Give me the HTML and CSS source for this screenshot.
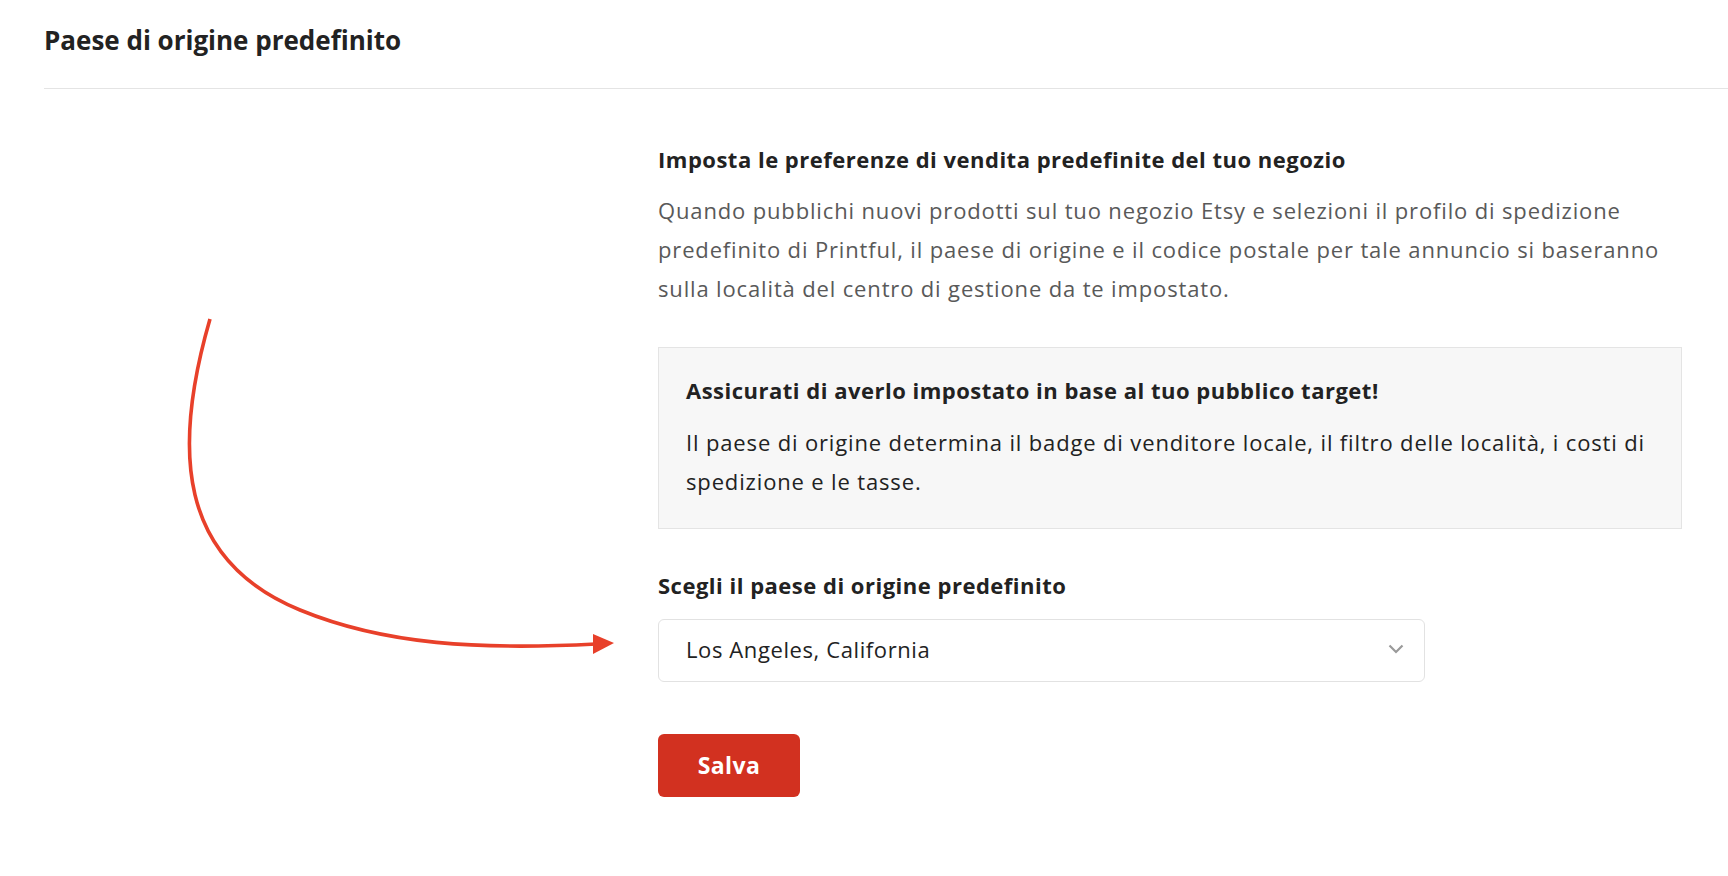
FILE: index.html
```html
<!DOCTYPE html>
<html lang="it">
<head>
  <meta charset="UTF-8" />
  <title>Paese di origine predefinito</title>
  <link rel="stylesheet" href="styles.css">
</head>
<body>
  <!-- intestazione sezione -->
  <header class="section-head">
    <h1 class="section-title">Paese di origine predefinito</h1>
  </header>

  <main class="section-body">
    <div class="aside"></div>

    <div class="settings">
      <h2 class="settings-title">Imposta le preferenze di vendita predefinite del tuo negozio</h2>
      <p class="settings-text">Quando pubblichi nuovi prodotti sul tuo negozio Etsy e selezioni il profilo di spedizione predefinito di Printful, il paese di origine e il codice postale per tale annuncio si baseranno sulla località del centro di gestione da te impostato.</p>

      <div class="notice">
        <h3 class="notice-title">Assicurati di averlo impostato in base al tuo pubblico target!</h3>
        <p class="notice-text">Il paese di origine determina il badge di venditore locale, il filtro delle località, i costi di spedizione e le tasse.</p>
      </div>

      <label class="field-label" for="origin">Scegli il paese di origine predefinito</label>
      <div class="select">
        <span id="origin" class="select-value">Los Angeles, California</span>
        <svg class="select-caret" width="16" height="10" viewBox="0 0 16 10">
          <path d="M1.5 1.5 L8 8 L14.5 1.5" fill="none" stroke="#9a9a9a" stroke-width="2.2" />
        </svg>
      </div>

      <button class="btn-save" type="button">Salva</button>
    </div>
  </main>

  <!-- freccia di richiamo -->
  <svg class="callout-arrow" width="700" height="700" viewBox="0 0 700 700">
    <path d="M210 319 C 172 450, 178 560, 300 610 C 385 645, 480 650, 596 644" fill="none" stroke="#e8402a" stroke-width="3.6" />
    <path d="M593 634 L614 643 L593 654 Z" fill="#e8402a" />
  </svg>
</body>
</html>
```

FILE: styles.css
```css
* {
  box-sizing: border-box;
  margin: 0;
  padding: 0;
}

body {
  font-family: "Open Sans", "Liberation Sans", sans-serif;
  color: #222;
  background: #fff;
  -webkit-font-smoothing: antialiased;
}

/* intestazione */
.section-head {
  margin-left: 44px;
  padding: 23px 0 30px;
  border-bottom: 1px solid #e4e4e4;
}

.section-title {
  font-size: 26px;
  line-height: 35px;
  font-weight: 700;
  color: #222;
}

/* corpo a due colonne */
.section-body {
  display: grid;
  grid-template-columns: 658px 1024px;
  padding-top: 56px;
}

.settings-title,
.notice-title,
.field-label {
  display: block;
  font-size: 22px;
  line-height: 28px;
  font-weight: 700;
  letter-spacing: 0.5px;
  color: #222;
}

.settings-text {
  margin-top: 18px;
  font-size: 22px;
  line-height: 39px;
  letter-spacing: 0.85px;
  color: #595959;
}

/* riquadro informativo */
.notice {
  margin-top: 39px;
  padding: 28px 27px 28px;
  background: #f7f7f7;
  border: 1px solid #e4e4e4;
}

.notice-text {
  margin-top: 19px;
  font-size: 22px;
  line-height: 38.5px;
  letter-spacing: 0.85px;
  color: #222;
}

.field-label {
  margin-top: 42px;
}

/* selettore */
.select {
  margin-top: 20px;
  width: 767px;
  height: 63px;
  padding: 0 20px 3px 27px;
  display: flex;
  align-items: center;
  justify-content: space-between;
  border: 1px solid #e2e2e2;
  border-radius: 6px;
  background: #fff;
}

.select-value {
  font-size: 22px;
  letter-spacing: 0.6px;
  color: #222;
}

.btn-save {
  display: block;
  margin-top: 52px;
  width: 142px;
  height: 63px;
  padding-bottom: 2px;
  border: 0;
  border-radius: 6px;
  background: #d23120;
  color: #fff;
  font-family: inherit;
  font-size: 23px;
  font-weight: 700;
  letter-spacing: 0.4px;
}

.callout-arrow {
  position: absolute;
  top: 0;
  left: 0;
  pointer-events: none;
}
```
